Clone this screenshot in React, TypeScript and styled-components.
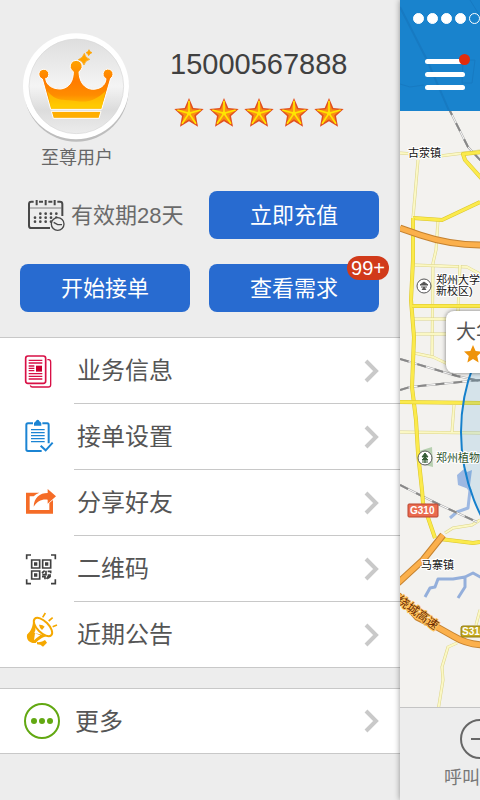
import React from "react";
import styled, { createGlobalStyle } from "styled-components";

const GlobalStyle = createGlobalStyle`
  * { box-sizing: border-box; }
  body {
    margin: 0;
    background: #ededed;
    color: #555;
    font-family: "Liberation Sans", "Noto Sans CJK SC", sans-serif;
  }
  button { font: inherit; color: inherit; border: 0; padding: 0; background: none; cursor: pointer; }
  svg { display: block; flex: none; }
`;

const Shell = styled.div`
  display: grid;
  grid-template-columns: minmax(0, 5fr) minmax(0, 1fr);
  min-height: 100vh;
  overflow: hidden;
`;

const Drawer = styled.aside`
  display: flex;
  flex-direction: column;
  background: #ededed;
`;

const Profile = styled.header`
  display: flex;
  gap: 33px;
  padding: 33px 20px 0 23px;
`;

const Member = styled.div`
  display: flex;
  flex-direction: column;
  align-items: center;
  width: 108px;
`;

const MemberLabel = styled.span`
  margin-top: 2px;
  font-size: 18px;
  line-height: 26px;
  color: #666;
`;

const Account = styled.div`
  padding: 12px 0 0 6px;
`;

const Phone = styled.h1`
  margin: 0;
  font-size: 29px;
  line-height: 38px;
  font-weight: 400;
  color: #404040;
`;

const Rating = styled.div`
  display: flex;
  justify-content: space-between;
  width: 170px;
  margin: 15px 0 0 4px;
`;

const Actions = styled.section`
  display: grid;
  grid-template-columns: 1fr 1fr;
  gap: 25px 19px;
  padding: 20px 21px 25px 20px;
`;

const Validity = styled.div`
  display: flex;
  align-items: center;
  gap: 6px;
  padding-left: 7px;
  font-size: 22px;
  color: #6a6a6a;
  white-space: nowrap;
`;

const ActionButton = styled.button`
  position: relative;
  height: 48px;
  padding-bottom: 4px;
  border-radius: 8px;
  background: #286bd0;
  color: #fff;
  font-size: 22px;
`;

const CountBadge = styled.span`
  position: absolute;
  top: -8px;
  right: -10px;
  width: 42px;
  border-radius: 12px;
  background: #d13a1a;
  font-size: 20px;
  line-height: 24px;
  text-align: center;
`;

const Menu = styled.ul`
  list-style: none;
  margin: 0 0 20px;
  padding: 0;
  background: #fff;
  border: solid #c8c8c8;
  border-width: 1px 0;
`;

const MenuItem = styled.li`
  &:not(:last-child) > button > span { border-bottom: 1px solid #c8c8c8; }
  &:last-child > button { height: 65px; }
  &:only-child > button { height: 64px; }
`;

const MenuButton = styled.button<{ $inset?: number }>`
  display: flex;
  align-items: center;
  width: 100%;
  height: 66px;
  padding-left: ${(p) => p.$inset ?? 22}px;
  text-align: left;
`;

const MenuBody = styled.span<{ $gap?: number }>`
  display: flex;
  flex: 1;
  align-items: center;
  justify-content: space-between;
  height: 100%;
  margin-left: ${(p) => p.$gap ?? 16}px;
  padding: 0 20px 0 3px;
  font-size: 24px;
`;

const MenuLabel = styled.span`
  padding-bottom: 4px;
`;

const Screen = styled.main`
  display: flex;
  flex-direction: column;
  position: relative;
  box-shadow: 0 0 6px rgba(0, 0, 0, 0.4);
  background: #f3f2ef;
  min-width: 0;
`;

const TopBar = styled.div`
  position: relative;
  height: 111px;
  overflow: hidden;
  background: #1983cd;
`;

const TopTexture = styled.svg`
  position: absolute;
  inset: 0;
`;

const Signal = styled.div`
  position: relative;
  display: flex;
  gap: 3px;
  padding: 13px 0 0 13px;
`;

const SignalDot = styled.i<{ $on: boolean }>`
  flex: none;
  width: 11px;
  height: 11px;
  border: 1px solid #fff;
  border-radius: 50%;
  background: ${(p) => (p.$on ? "#fff" : "transparent")};
`;

const BurgerButton = styled.button`
  position: relative;
  display: flex;
  flex-direction: column;
  gap: 8px;
  width: 40px;
  margin: 35px 0 0 25px;
`;

const BurgerLine = styled.i`
  height: 5px;
  border-radius: 3px;
  background: #fff;
`;

const AlertDot = styled.i`
  position: absolute;
  top: -5px;
  right: -5px;
  width: 11px;
  height: 11px;
  border-radius: 50%;
  background: #e22c0c;
`;

const MapArea = styled.div`
  position: relative;
  flex: 1;
  min-height: 596px;
  overflow: hidden;
`;

const MapSvg = styled.svg`
  position: absolute;
  inset: 0;
  width: 100%;
  height: 100%;
`;

const Callout = styled.div`
  position: absolute;
  left: 46px;
  top: 200px;
  width: 150px;
  height: 62px;
  padding: 8px 0 0 10px;
  border-radius: 8px;
  background: #fff;
  box-shadow: 0 0 4px rgba(0, 0, 0, 0.5);
  font-size: 20px;
  line-height: 26px;
`;

const CalloutRating = styled.div`
  padding-left: 8px;
`;

const BottomBar = styled.footer`
  height: 93px;
  overflow: hidden;
  border-top: 1px solid #c4c4c4;
  background: #ededed;
`;

const CallButton = styled.button`
  display: flex;
  flex-direction: column;
  align-items: center;
  width: 72px;
  margin: 11px 0 0 44px;
  font-size: 18px;
  line-height: 26px;
  color: #777;
`;

const CallLabel = styled.span`
  align-self: flex-start;
  margin-top: 6px;
`;

function Crown() {
  return (
    <svg width="108" height="110" viewBox="69 38 324 330" role="img" aria-label="皇冠">
      <defs>
        <linearGradient id="disc" x1="0" y1="0" x2="0" y2="1">
          <stop offset="0" stopColor="#dedede" />
          <stop offset=".5" stopColor="#f4f4f4" />
          <stop offset=".75" stopColor="#dcdcdc" />
          <stop offset="1" stopColor="#ececec" />
        </linearGradient>
        <linearGradient id="gold" gradientUnits="userSpaceOnUse" x1="0" y1="125" x2="0" y2="290">
          <stop offset="0" stopColor="#ffa000" />
          <stop offset=".35" stopColor="#ff7c00" />
          <stop offset=".6" stopColor="#ff8c00" />
          <stop offset=".8" stopColor="#ffc000" />
          <stop offset="1" stopColor="#ffb000" />
        </linearGradient>
      </defs>
      <circle cx="229" cy="207" r="157" fill="#bdbdbd" />
      <circle cx="228" cy="198" r="159" fill="#fff" />
      <circle cx="229" cy="198" r="142" fill="url(#disc)" stroke="#d8d8d8" strokeWidth="2" />
      <g fill="url(#gold)" stroke="#fff" strokeWidth="3">
        <path d="M137 174 C139 196 158 206 182 206 C207 203 220 184 220 154 A18 18 0 1 1 237 154 C238 185 252 204 277 207 C302 206 316 196 318 175 A15 15 0 1 1 332 174 L305 267 L152 267 L127 176 A15 15 0 1 1 140 174 Z" />
        <path d="M154 273 H303 L297 294 H160Z" fill="#ffae00" />
      </g>
      <path d="M253 99 Q255 113 269 117 Q255 121 252 134 Q248 121 235 118 Q249 113 253 99Z M267 88 Q269 95 276 97 Q269 99 266 106 Q264 99 258 97 Q265 95 267 88Z" fill="#ffa300" stroke="#ffa300" strokeWidth="2" />
      <path d="M142 212 C169 245 188 236 228 242 C263 248 288 240 317 212 L304 264 H154Z" fill="#ffd000" opacity=".6" />
    </svg>
  );
}

function RatingStar() {
  return (
    <svg width="30" height="29" viewBox="0 0 90 87">
      <path d="M45 0 L58 30 L89 33 L66 54 L72 86 L45 70 L18 86 L24 54 L1 33 L32 30Z" fill="#e2501e" />
      <path d="M45 9 L54 34 L80 37 L61 52 L66 77 L45 64 L24 77 L29 52 L10 37 L36 34Z" fill="#f98f14" />
      <path d="M45 8 L45 46 L80 36 M45 46 L66 77 M45 46 L24 77 M45 46 L10 36" fill="none" stroke="#ffe500" strokeWidth="5" />
      <circle cx="45" cy="46" r="6" fill="#ffe500" />
    </svg>
  );
}

const CALENDAR_DOTS = [
  [1, 2, 3, 4],
  [0, 1, 2, 3, 4],
  [0, 1, 2, 3],
].flatMap((cols, row) => cols.map((col) => [105 + col * 16, 105 + row * 12]));

function CalendarIcon() {
  return (
    <svg width="38" height="34" viewBox="81 58 114 102" fill="none" stroke="#484848">
      <path d="M101 69 H94 Q87 69 87 76 V141 Q87 148 94 148 H150 M187 112 V76 Q187 69 180 69 H172 M117 69 H129 M145 69 H157" strokeWidth="6" />
      <path d="M110 64 V80 M137 64 V80 M164 64 V80" strokeWidth="6" />
      <path d="M90 88 H184" strokeWidth="2" />
      <g fill="#484848" stroke="none">
        {CALENDAR_DOTS.map(([x, y]) => <circle key={`${x}-${y}`} cx={x} cy={y} r="4" />)}
      </g>
      <circle cx="173" cy="136" r="19" fill="#ededed" strokeWidth="4" />
      <path d="M161 131 L173 138 H186" strokeWidth="4" />
    </svg>
  );
}

function NewsIcon() {
  return (
    <svg width="36" height="36" viewBox="66 37 108 108" fill="none" stroke="#d80f45">
      <rect x="77" y="46" width="60" height="82" rx="7" strokeWidth="5" />
      <path d="M142 57 H146 Q152 57 152 64 V132 Q152 139 145 139 H97 Q92 139 91 134" strokeWidth="4" />
      <path d="M86 59 H127 M86 67 H127 M86 76 H103 M86 83 H103 M86 90 H103 M86 99 H127 M86 107 H127 M86 115 H127" strokeWidth="4" />
      <path d="M108 75 H126 V93 H108Z" fill="#c9002f" stroke="none" />
    </svg>
  );
}

function ClipboardIcon() {
  return (
    <svg width="36" height="36" viewBox="66 236 108 108" fill="none" stroke="#1b84d3">
      <path d="M99 249 H84 Q79 249 79 254 V327 Q79 332 84 332 H125 M127 249 H142 Q146 249 146 254 V309" strokeWidth="6" />
      <path d="M102 256 V248 Q106 244 108 243 A5 5 0 0 1 118 243 Q122 245 124 249 V256Z" fill="#1b84d3" stroke="none" />
      <path d="M93 268 H134 M93 277 H134 M93 286 H134 M93 295 H134 M93 304 H134" strokeWidth="4" />
      <path d="M122 316 L137 330 L158 307" strokeWidth="6" />
    </svg>
  );
}

function ShareIcon() {
  return (
    <svg width="36" height="36" viewBox="66 433 108 108" fill="#f56c27">
      <path d="M78 456 H118 Q108 460 101 467 H89 V508 H148 V487 L159 478 V519 H78Z" />
      <path d="M143 445 L168 467 L143 489 V477 C124 475 112 482 101 498 C102 471 119 457 143 457Z" />
    </svg>
  );
}

function QrIcon() {
  return (
    <svg width="36" height="36" viewBox="66 92 108 108" fill="none" stroke="#404040">
      <path d="M80 117 V104 H93 M153 104 H166 V117 M166 177 V190 H153 M93 190 H80 V177" strokeWidth="5" />
      <path d="M95 119 H119 V143 H95Z M128 119 H152 V143 H128Z M95 152 H119 V176 H95Z" strokeWidth="5" />
      <path d="M102 126 H112 V136 H102Z M135 126 H145 V136 H135Z M102 159 H112 V169 H102Z" fill="#404040" stroke="none" />
      <path d="M126 158 L134 151 M138 151 V163 H127 M143 153 H152 V159 M143 164 H153 M126 169 H135 V177 M140 176 L147 164 M144 174 L152 167" strokeWidth="5" />
    </svg>
  );
}

function HornIcon() {
  return (
    <svg width="36" height="36" viewBox="66 289 108 108" fill="#f5a800" overflow="visible">
      <ellipse cx="129" cy="319" rx="35" ry="17" transform="rotate(45 129 319)" fill="none" stroke="#f5a800" strokeWidth="6" />
      <path d="M99 300 L106 316 Q108 329 103 337 L120 341 Q138 346 151 344 C130 347 116 358 107 367 C92 369 78 359 81 342 C92 331 99 319 99 300Z M105 338 L102 359 Q112 350 121 344Z" fillRule="evenodd" />
      <path d="M111 364 Q125 366 135 358 L141 366 L129 378 L121 372 L111 371Z" />
      <path d="M117 312 Q128 311 134 318 L126 328 Q119 323 117 312Z" />
      <path d="M128 290 L136 277 M146 301 L158 291 M158 318 L171 313" stroke="#f5a800" strokeWidth="5" />
    </svg>
  );
}

function MoreIcon() {
  return (
    <svg width="36" height="36" viewBox="0 0 36 36" fill="#62a812">
      <circle cx="18" cy="18" r="17" fill="none" stroke="#62a812" strokeWidth="2" />
      <circle cx="10" cy="18" r="3" />
      <circle cx="18" cy="18" r="3" />
      <circle cx="26" cy="18" r="3" />
    </svg>
  );
}

function Chevron() {
  return (
    <svg width="16" height="24" viewBox="0 0 16 24" fill="none" stroke="#c9c9c9" strokeWidth="4">
      <path d="M2 2 L12 12 L2 22" />
    </svg>
  );
}

const MENU = [
  { label: "业务信息", Icon: NewsIcon },
  { label: "接单设置", Icon: ClipboardIcon },
  { label: "分享好友", Icon: ShareIcon },
  { label: "二维码", Icon: QrIcon },
  { label: "近期公告", Icon: HornIcon },
];

function Road({ d, major }: { d: string; major?: boolean }) {
  return (
    <>
      <path d={d} stroke={major ? "#d9c52c" : "#dcd48a"} strokeWidth={major ? 4 : 3} />
      <path d={d} stroke={major ? "#fbea4c" : "#fbf8c4"} strokeWidth={major ? 3 : 2} />
    </>
  );
}

function Highway({ d }: { d: string }) {
  return (
    <>
      <path d={d} stroke="#c5822f" strokeWidth="7" />
      <path d={d} stroke="#fbb04c" strokeWidth="5" />
    </>
  );
}

function Rail({ d }: { d: string }) {
  return (
    <>
      <path d={d} stroke="#a8a8a8" strokeWidth="2" />
      <path d={d} stroke="#fff" strokeWidth="1" />
      <path d={d} stroke="#888" strokeWidth="2" strokeDasharray="9 9" />
    </>
  );
}

function CityMap() {
  return (
    <MapSvg aria-label="地图">
      <g fill="none" strokeLinejoin="round">
        <path d="M57 364 L64 358 L67 361 L72 359 L70 374 L66 377 L58 374Z" fill="#9db8e2" />
        <path d="M60 367 L70 379 L68 397 L57 401 L50 407" stroke="#9db8e2" strokeWidth="3" />
        <path d="M25 486 L30 477 L35 476 L38 468 L53 468 L65 466 L73 462 L82 467 M65 466 L65 476 L58 487" stroke="#94afdb" strokeWidth="3" />
        <path d="M19 340 L32 336 L33 356 L21 353Z" fill="#b7d0b0" />
        <Road d="M0 42 L40 45 L80 40" />
        <Road d="M18 49 L13 107" />
        <Road d="M38 109 L36 139 L33 152 L32 246" />
        <Road d="M15 154 L67 156 L80 163" />
        <Road d="M60 154 L58 200" />
        <Road d="M14 208 H50 M14 223 H50 M14 242 L33 246 L50 254" />
        <Road d="M0 321 L80 322 M54 294 L52 321" />
        <Road d="M45 422 L53 417 L72 414 L80 409" />
        <Road d="M80 499 L76 514 M57 532 L48 536 L42 556 L43 569 L38 600" />
        <Rail d="M48 -4 L68 36 L82 51" />
        <Rail d="M0 248 L57 265 L80 270" />
        <Rail d="M0 279 L10 276 L50 272 L80 269" />
        <Rail d="M0 374 L40 394 L77 411" />
        <Road major d="M82 41 L63 43 L65 49 L82 68" />
        <Road major d="M80 91 L42 109 L13 107" />
        <Road major d="M13 107 L13 149 L11 189 L14 226 L12 276 L16 309 L18 342 L22 379 L23 392 L35 427" />
        <Road major d="M12 195 H80" />
        <Road major d="M0 291 L80 292" />
        <Road major d="M40 428 L73 432 L80 431" />
        <Highway d="M0 117 L20 124 Q50 134 80 134" />
        <Highway d="M43 424 L23 449 L-2 472" />
        <Highway d="M-2 484 L17 506 L37 516 L53 525 Q66 533 82 534" />
        <circle cx="246" cy="321" r="185" fill="rgba(0,125,200,.12)" stroke="#1580cc" strokeWidth="2" />
        <g fill="#fff" stroke="#555" strokeWidth="1">
          <circle cx="24" cy="175" r="7" />
          <circle cx="25" cy="347" r="7" />
        </g>
        <path d="M20 174 L24 171 L28 174Z M21 176 H27 M22 179 L24 176 L26 179" fill="#555" stroke="#555" />
        <path d="M25 342 L28 346 H22Z M25 346 L28 349 H22Z M25 349 V352 M22 351 H28" fill="#365c36" stroke="#365c36" />
      </g>
      <g fontSize="11" fill="#111" stroke="#fff" strokeWidth="2" paintOrder="stroke">
        <text x="8" y="46">古荥镇</text>
        <text x="36" y="173">郑州大学</text>
        <text x="36" y="184">新校区)</text>
        <text x="36" y="351" fill="#2b522b">郑州植物</text>
        <text x="21" y="458">马寨镇</text>
        <text x="0" y="0" fill="#6a2800" stroke="#ffc45e" transform="translate(-4 491) rotate(36)" fontSize="12">绕城高速</text>
      </g>
      <g fontSize="10" fontWeight="700" fill="#fff">
        <rect x="8" y="393" width="30" height="13" rx="1" fill="#ea6b4f" stroke="#b9452f" />
        <text x="10" y="403">G310</text>
        <rect x="61" y="515" width="34" height="11" rx="2" fill="#c3a81c" stroke="#937c0e" />
        <text x="62" y="524">S316</text>
      </g>
    </MapSvg>
  );
}

export default function App() {
  return (
    <>
      <GlobalStyle />
      <Shell>
        <Drawer>
          <Profile>
            <Member>
              <Crown />
              <MemberLabel>至尊用户</MemberLabel>
            </Member>
            <Account>
              <Phone>15000567888</Phone>
              <Rating role="img" aria-label="五星">
                {[1, 2, 3, 4, 5].map((n) => <RatingStar key={n} />)}
              </Rating>
            </Account>
          </Profile>
          <Actions>
            <Validity>
              <CalendarIcon />
              <MenuLabel>有效期28天</MenuLabel>
            </Validity>
            <ActionButton>立即充值</ActionButton>
            <ActionButton>开始接单</ActionButton>
            <ActionButton>
              查看需求
              <CountBadge>99+</CountBadge>
            </ActionButton>
          </Actions>
          <Menu>
            {MENU.map(({ label, Icon }) => (
              <MenuItem key={label}>
                <MenuButton>
                  <Icon />
                  <MenuBody>
                    <MenuLabel>{label}</MenuLabel>
                    <Chevron />
                  </MenuBody>
                </MenuButton>
              </MenuItem>
            ))}
          </Menu>
          <Menu>
            <MenuItem>
              <MenuButton $inset={24}>
                <MoreIcon />
                <MenuBody $gap={12}>
                  <MenuLabel>更多</MenuLabel>
                  <Chevron />
                </MenuBody>
              </MenuButton>
            </MenuItem>
          </Menu>
        </Drawer>
        <Screen>
          <TopBar>
            <TopTexture width="100%" height="111" fill="none" stroke="#177ac2" strokeWidth="2" aria-hidden="true">
              <path d="M0 7 L27 60 L50 113" />
              <path d="M0 84 L10 87 L24 85" strokeWidth="1" />
              <path d="M63 60 H75 L72 83 H62Z M70 0 L80 16" strokeWidth="1" />
            </TopTexture>
            <Signal>
              {[true, true, true, true, false].map((on, i) => <SignalDot key={i} $on={on} />)}
            </Signal>
            <BurgerButton aria-label="菜单">
              <BurgerLine />
              <BurgerLine />
              <BurgerLine />
              <AlertDot />
            </BurgerButton>
          </TopBar>
          <MapArea>
            <CityMap />
            <Callout>
              大华
              <CalloutRating>
                <svg width="18" height="18" viewBox="0 0 18 18" fill="#ee930a">
                  <path d="M9 0 L11.6 6 L18 6.6 L13.2 11 L14.6 17.5 L9 14 L3.4 17.5 L4.8 11 L0 6.6 L6.4 6Z" />
                </svg>
              </CalloutRating>
            </Callout>
          </MapArea>
          <BottomBar>
            <CallButton>
              <svg width="40" height="40" viewBox="0 0 40 40" fill="none" stroke="#666" strokeWidth="2">
                <circle cx="20" cy="20" r="19" />
                <path d="M11 20 H29" />
              </svg>
              <CallLabel>呼叫</CallLabel>
            </CallButton>
          </BottomBar>
        </Screen>
      </Shell>
    </>
  );
}
